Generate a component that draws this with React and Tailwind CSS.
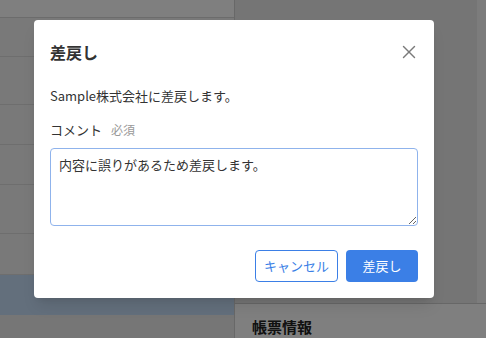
import { X } from 'lucide-react';

const rows = [39, 48, 40, 40, 49, 41];

function Background() {
  return (
    <div className="flex h-[338px] w-[486px] overflow-hidden bg-white">
      <div className="flex w-[234px] shrink-0 flex-col bg-[#f3f3f3]">
        <div className="h-[18px] shrink-0 border-b border-[#d8d8d8] bg-white" />
        {rows.map((h, i) => (
          <div key={i} style={{ height: h }} className="shrink-0 border-b border-[#dddddd]" />
        ))}
        <div className="h-[40px] shrink-0 bg-[#c6dff8]" />
        <div className="flex-1 bg-[#ededed]" />
      </div>
      <div className="flex flex-1 flex-col border-l border-[#d0d0d0]">
        <div className="flex h-[303px] shrink-0">
          <div className="flex-1 bg-[#ebebeb]" />
          <div className="w-[9px] bg-[#f8f8f8]" />
        </div>
        <div className="flex-1 border-t border-[#cfcfcf] bg-white px-[17px] pt-[15px]">
          <p className="text-[15px] font-bold leading-none text-[#222]">帳票情報</p>
        </div>
      </div>
    </div>
  );
}

export default function App() {
  return (
    <div className="relative h-[338px] w-[486px] overflow-hidden font-['Noto_Sans_CJK_JP','Noto_Sans',sans-serif]">
      <Background />
      <div className="absolute inset-0 bg-black/50 pl-[34px] pt-[20px]">
        <div className="flex h-[278px] w-[400px] flex-col rounded-[4px] bg-white px-4 shadow-lg">
          <div className="flex h-[64px] items-center justify-between">
            <h2 className="text-[16px] font-bold text-[#333]">差戻し</h2>
            <X size={22} strokeWidth={1.5} className="mr-[-2px] text-[#7a7a7a]" />
          </div>
          <p className="text-[13px] leading-[24px] text-[#333]">Sample株式会社に差戻します。</p>
          <div className="mt-[12px] flex items-baseline gap-[9px] text-[#333]">
            <span className="text-[13px]">コメント</span>
            <span className="text-[12px] text-[#999]">必須</span>
          </div>
          <textarea
            defaultValue="内容に誤りがあるため差戻します。"
            className="mt-[8px] h-[78px] w-full resize-y rounded-[4px] border border-[#8fb3ec] px-[8px] py-[6px] text-[13px] leading-[20px] text-[#333] outline-none"
          />
          <div className="mt-[24px] flex justify-end gap-[8px]">
            <button className="h-[32px] w-[83px] rounded-[4px] border border-[#3b7fe6] bg-white text-[13px] text-[#3b7fe6]">
              キャンセル
            </button>
            <button className="h-[32px] w-[72px] rounded-[4px] bg-[#3b7fe6] text-[13px] text-white">
              差戻し
            </button>
          </div>
        </div>
      </div>
    </div>
  );
}
